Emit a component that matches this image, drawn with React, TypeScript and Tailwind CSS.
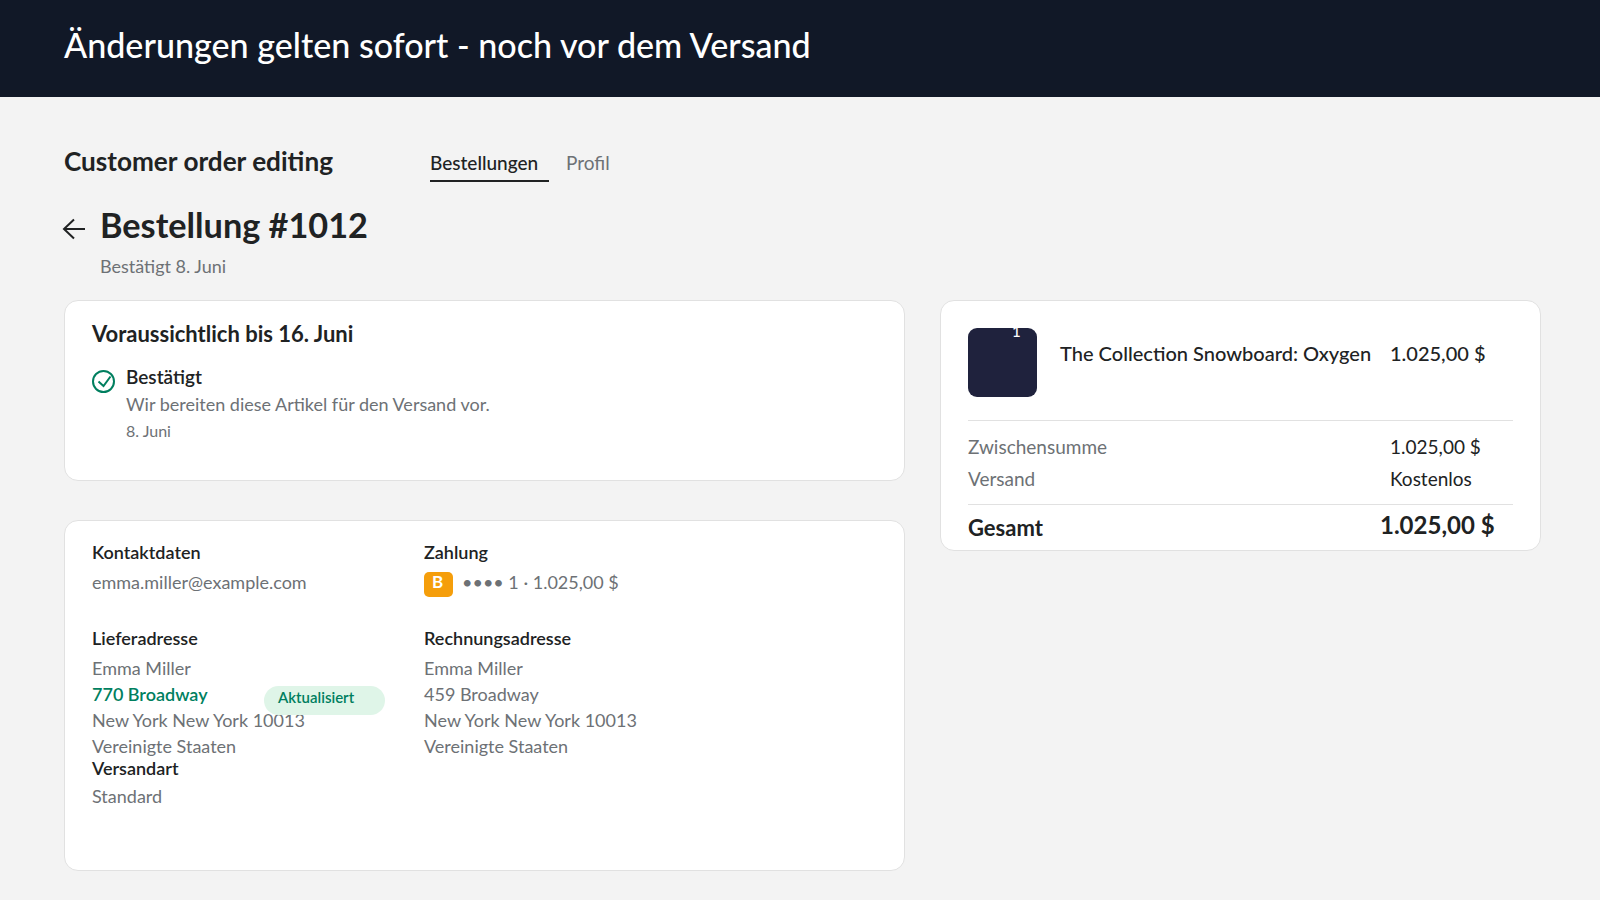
import type { ReactNode } from "react";

const shippingAddress = ["New York New York 10013", "Vereinigte Staaten"];
const billingAddress = ["Emma Miller", "459 Broadway", "New York New York 10013", "Vereinigte Staaten"];

const summaryRows = [
  { label: "Zwischensumme", value: "1.025,00 $" },
  { label: "Versand", value: "Kostenlos" },
];

function Card({ className, children }: { className: string; children: ReactNode }) {
  return <section className={`rounded-[14px] border border-[#e1e1e1] bg-white ${className}`}>{children}</section>;
}

function Label({ children }: { children: ReactNode }) {
  return <h3 className="h-[26px] text-[18px] leading-[26px] font-semibold text-[#202223]">{children}</h3>;
}

function Line({ children }: { children: ReactNode }) {
  return <p className="h-[26px] text-[18px] leading-[26px] text-[#6d7175]">{children}</p>;
}

function ArrowLeft() {
  return (
    <svg width="24" height="22" viewBox="0 0 24 22" fill="none" stroke="#202223" strokeWidth="2">
      <path d="M23 11H2M12 1.5L2 11l10 9.5" />
    </svg>
  );
}

function CheckCircle() {
  return (
    <svg width="24" height="24" viewBox="0 0 24 24" fill="none" stroke="#007f5f" strokeWidth="2">
      <circle cx="11.5" cy="11.5" r="10.5" />
      <path d="M6.5 11.5l5 4.5 7-9.5" />
    </svg>
  );
}

export default function App() {
  return (
    <div className="h-[900px] w-[1600px] overflow-hidden bg-[#f3f3f3] font-['Lato',sans-serif] whitespace-nowrap">
      {/* Banner */}
      <header className="h-[97px] bg-[#111827] pl-16">
        <p className="text-[34.1px] leading-[90px] font-medium text-white">Änderungen gelten sofort - noch vor dem Versand</p>
      </header>

      {/* Shop name and tabs */}
      <div className="flex h-[108px] pt-12 pl-16">
        <h2 className="w-[366px] text-[26.15px] leading-[32px] font-bold text-[#202223]">Customer order editing</h2>
        <nav className="flex pt-1 text-[19px] leading-[28px]">
          <span className="h-[33px] w-[119px] border-b-2 border-[#202223] font-medium text-[#202223]">Bestellungen</span>
          <span className="ml-[17px] text-[#6d7175]">Profil</span>
        </nav>
      </div>

      {/* Order heading */}
      <div className="flex h-[95px] pl-[62px]">
        <div className="w-[38px] pt-[13px]">
          <ArrowLeft />
        </div>
        <div>
          <h1 className="text-[34.25px] leading-[40px] font-bold text-[#202223]">Bestellung #1012</h1>
          <p className="mt-[9px] text-[18px] leading-[24px] text-[#6d7175]">Bestätigt 8. Juni</p>
        </div>
      </div>

      <main className="flex items-start gap-[35px] pl-16">
        <div className="flex w-[841px] flex-col gap-[39px]">
          {/* Delivery status */}
          <Card className="h-[181px] px-[27px] pt-[18px]">
            <h2 className="text-[22px] leading-[30px] font-bold text-[#202223]">Voraussichtlich bis 16. Juni</h2>
            <div className="mt-[14px] flex">
              <div className="w-[34px] pt-[7px]">
                <CheckCircle />
              </div>
              <div>
                <p className="text-[19px] leading-[28px] font-semibold text-[#202223]">Bestätigt</p>
                <Line>Wir bereiten diese Artikel für den Versand vor.</Line>
                <p className="mt-[1px] text-[16px] leading-[26px] text-[#6d7175]">8. Juni</p>
              </div>
            </div>
          </Card>

          {/* Contact, payment and addresses */}
          <Card className="grid h-[351px] grid-cols-[332px_1fr] px-[27px] pt-[18px]">
            <div>
              <Label>Kontaktdaten</Label>
              <div className="mt-1">
                <Line>emma.miller@example.com</Line>
              </div>
              <div className="mt-[30px]">
                <Label>Lieferadresse</Label>
              </div>
              <div className="mt-1">
                <Line>Emma Miller</Line>
                <div className="relative">
                  <p className="h-[26px] text-[18px] leading-[26px] font-semibold text-[#007f5f]">770 Broadway</p>
                  <span className="absolute top-[5px] left-[172px] h-[29px] w-[121px] rounded-full bg-[#dff5e8] pl-[14px] text-[15px] leading-[23px] font-semibold text-[#007f5f]">
                    Aktualisiert
                  </span>
                </div>
                {shippingAddress.map((line) => (
                  <Line key={line}>{line}</Line>
                ))}
              </div>
              <div className="-mt-1">
                <Label>Versandart</Label>
              </div>
              <div className="mt-[2px]">
                <Line>Standard</Line>
              </div>
            </div>

            <div>
              <Label>Zahlung</Label>
              <div className="mt-1 flex">
                <span className="mt-[3px] mr-[9px] h-[25px] w-[29px] rounded-[5px] bg-[#f59e0b] pl-2 text-[17px] leading-[20px] font-bold text-white">
                  B
                </span>
                <Line>•••• 1 · 1.025,00 $</Line>
              </div>
              <div className="mt-[28px]">
                <Label>Rechnungsadresse</Label>
              </div>
              <div className="mt-1">
                {billingAddress.map((line) => (
                  <Line key={line}>{line}</Line>
                ))}
              </div>
            </div>
          </Card>
        </div>

        {/* Order summary */}
        <Card className="h-[251px] w-[601px] px-[27px] pt-[27px]">
          <div className="flex h-[93px] w-[545px] border-b border-[#e1e1e1] text-[20px] leading-[28px] font-medium text-[#202223]">
            <div className="h-[69px] w-[69px] rounded-[9px] bg-[#1f223d]">
              <span className="-mt-[5px] block pl-[44px] text-[15px] leading-[16px] text-white">1</span>
            </div>
            <span className="mt-[11px] ml-[23px] w-[330px] text-[20.05px]">The Collection Snowboard: Oxygen</span>
            <span className="mt-[11px]">1.025,00 $</span>
          </div>
          <div className="h-[84px] w-[545px] border-b border-[#e1e1e1] pt-[10px] text-[19px] leading-[32px]">
            {summaryRows.map((row) => (
              <div key={row.label} className="flex">
                <span className="w-[422px] text-[#6d7175]">{row.label}</span>
                <span className="text-[#202223]">{row.value}</span>
              </div>
            ))}
          </div>
          <div className="flex text-[#202223]">
            <span className="mt-2 w-[412px] text-[22px] leading-[30px] font-bold">Gesamt</span>
            <span className="mt-[5px] text-[24px] leading-[30px] font-bold">1.025,00 $</span>
          </div>
        </Card>
      </main>
    </div>
  );
}
